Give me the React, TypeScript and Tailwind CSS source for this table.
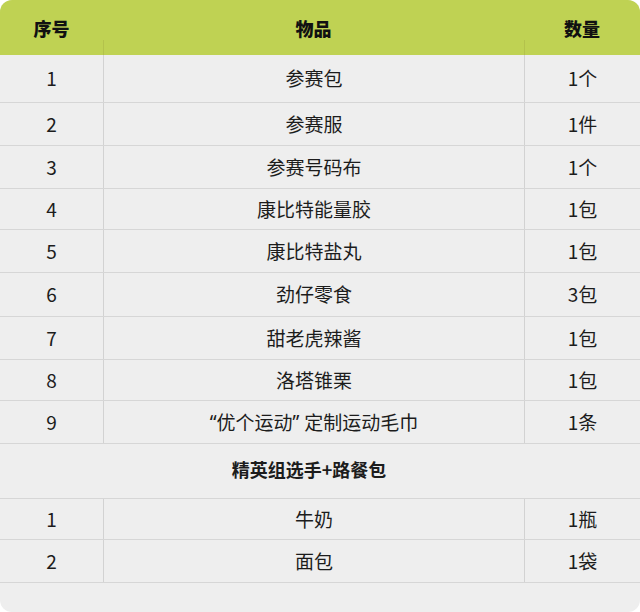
import React from 'react';

type Item = { no: string; name: React.ReactNode; qty: string; h: string };

const mainItems: Item[] = [
  { no: '1', name: '参赛包', qty: '1个', h: 'h-[48px]' },
  { no: '2', name: '参赛服', qty: '1件', h: 'h-[43px]' },
  { no: '3', name: '参赛号码布', qty: '1个', h: 'h-[43px]' },
  { no: '4', name: '康比特能量胶', qty: '1包', h: 'h-[41px]' },
  { no: '5', name: '康比特盐丸', qty: '1包', h: 'h-[43px]' },
  { no: '6', name: '劲仔零食', qty: '3包', h: 'h-[44px]' },
  { no: '7', name: '甜老虎辣酱', qty: '1包', h: 'h-[43px]' },
  { no: '8', name: '洛塔锥栗', qty: '1包', h: 'h-[41px]' },
  {
    no: '9',
    name: (
      <>
        <span className="font-['Noto_Sans',sans-serif]">“</span>优个运动
        <span className="font-['Noto_Sans',sans-serif]">” </span>定制运动毛巾
      </>
    ),
    qty: '1条',
    h: 'h-[43px]',
  },
];

const eliteItems: Item[] = [
  { no: '1', name: '牛奶', qty: '1瓶', h: 'h-[41px]' },
  { no: '2', name: '面包', qty: '1袋', h: 'h-[43px]' },
];

const Row = ({ item }: { item: Item }) => (
  <div className={`grid grid-cols-[103px_421px_1fr] border-b border-[#d6d6d6] ${item.h}`}>
    <div className="flex items-center justify-center">{item.no}</div>
    <div className="flex items-center justify-center border-l border-[#d2d2d2] whitespace-pre">{item.name}</div>
    <div className="flex items-center justify-center border-l border-[#d2d2d2]">{item.qty}</div>
  </div>
);

export default function App() {
  return (
    <div className="w-[640px] h-[612px] bg-white">
      <div className="w-[640px] h-[612px] bg-[#eeeeee] rounded-[12px] overflow-hidden text-[19px] text-[#1c1c1c] flex flex-col font-['Noto_Sans_CJK_SC','Noto_Sans',sans-serif]">
        {/* header */}
        <div className="grid grid-cols-[103px_421px_1fr] grid-rows-[40px_15px] h-[55px] bg-[#bfd253] text-[18px] font-extrabold text-[#111]">
          <div className="row-span-2 col-start-1 row-start-1 flex items-center justify-center pt-[2px]">序号</div>
          <div className="row-span-2 col-start-2 row-start-1 flex items-center justify-center pt-[2px]">物品</div>
          <div className="row-span-2 col-start-3 row-start-1 flex items-center justify-center pt-[2px]">数量</div>
          <div className="col-start-2 row-start-2 border-l border-[#b3c24c]" />
          <div className="col-start-3 row-start-2 border-l border-[#b3c24c]" />
        </div>

        {mainItems.map((it) => (
          <Row key={'m' + it.no} item={it} />
        ))}

        <div className="h-[55px] flex items-center justify-center text-[18px] font-bold border-b border-[#d6d6d6] pb-[3px] pr-[22px]">
          精英组选手+路餐包
        </div>

        {eliteItems.map((it) => (
          <Row key={'e' + it.no} item={it} />
        ))}

        <div className="flex-1" />
      </div>
    </div>
  );
}
